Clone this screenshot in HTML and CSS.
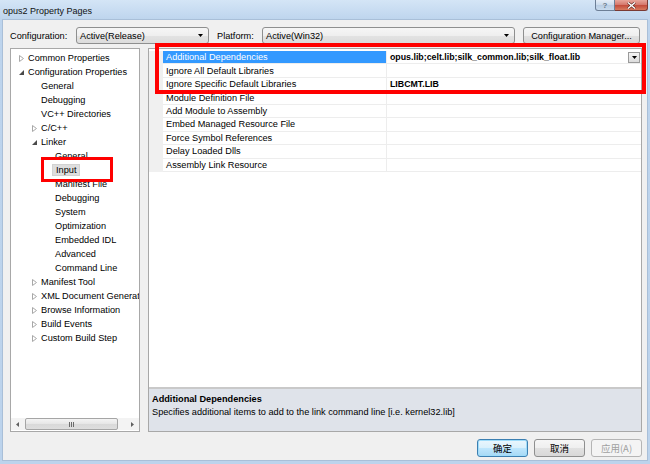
FILE: index.html
```html
<!DOCTYPE html>
<html lang="en">
<head>
<meta charset="UTF-8">
<meta name="viewport" content="width=device-width, initial-scale=1.0">
<title>opus2 Property Pages</title>
<link rel="stylesheet" href="styles.css">
</head>
<body>
    <div class="window">
        <!-- Title Bar -->
        <div class="title-bar">
            <span class="title-text">opus2 Property Pages</span>
            <div class="caption-buttons">
                <span class="cap-btn cap-help">?</span>
                <span class="cap-btn cap-close">
                    <svg width="9" height="7" viewBox="0 0 9 7"><path d="M1 0.5 L8 6.5 M8 0.5 L1 6.5" stroke="#5a2a24" stroke-width="2.6"/><path d="M1 0.5 L8 6.5 M8 0.5 L1 6.5" stroke="#fff" stroke-width="1.4"/></svg>
                </span>
            </div>
        </div>

        <div class="client">
            <!-- Configuration / Platform -->
            <div class="config-row">
                <span class="label label-config">Configuration:</span>
                <div class="combo combo-config">
                    <span>Active(Release)</span>
                    <svg class="combo-arrow" width="5" height="3" viewBox="0 0 5 3"><path d="M0 0 H5 L2.5 3 Z" fill="#000"/></svg>
                </div>
                <span class="label label-platform">Platform:</span>
                <div class="combo combo-platform">
                    <span>Active(Win32)</span>
                    <svg class="combo-arrow" width="5" height="3" viewBox="0 0 5 3"><path d="M0 0 H5 L2.5 3 Z" fill="#000"/></svg>
                </div>
                <button class="btn btn-manager">Configuration Manager...</button>
            </div>

            <div class="panes">
                <!-- Tree -->
                <div class="tree">
                    <div class="tree-items">
                        <div class="row l1"><span class="tw"><svg width="5" height="7" viewBox="0 0 5 7"><path d="M0.5 0.5 L4.5 3.5 L0.5 6.5 Z" fill="none" stroke="#a8a8a8"/></svg></span>Common Properties</div>
                        <div class="row l1"><span class="tw"><svg width="5" height="5" viewBox="0 0 5 5"><path d="M5 0 V5 H0 Z" fill="#4a4a4a"/></svg></span>Configuration Properties</div>
                        <div class="row l2"><span class="tw"></span>General</div>
                        <div class="row l2"><span class="tw"></span>Debugging</div>
                        <div class="row l2"><span class="tw"></span>VC++ Directories</div>
                        <div class="row l2"><span class="tw"><svg width="5" height="7" viewBox="0 0 5 7"><path d="M0.5 0.5 L4.5 3.5 L0.5 6.5 Z" fill="none" stroke="#a8a8a8"/></svg></span>C/C++</div>
                        <div class="row l2"><span class="tw"><svg width="5" height="5" viewBox="0 0 5 5"><path d="M5 0 V5 H0 Z" fill="#4a4a4a"/></svg></span>Linker</div>
                        <div class="row l3">General</div>
                        <div class="row l3"><span class="sel">Input</span></div>
                        <div class="row l3">Manifest File</div>
                        <div class="row l3">Debugging</div>
                        <div class="row l3">System</div>
                        <div class="row l3">Optimization</div>
                        <div class="row l3">Embedded IDL</div>
                        <div class="row l3">Advanced</div>
                        <div class="row l3">Command Line</div>
                        <div class="row l2"><span class="tw"><svg width="5" height="7" viewBox="0 0 5 7"><path d="M0.5 0.5 L4.5 3.5 L0.5 6.5 Z" fill="none" stroke="#a8a8a8"/></svg></span>Manifest Tool</div>
                        <div class="row l2"><span class="tw"><svg width="5" height="7" viewBox="0 0 5 7"><path d="M0.5 0.5 L4.5 3.5 L0.5 6.5 Z" fill="none" stroke="#a8a8a8"/></svg></span><span class="clip">XML Document Generator</span></div>
                        <div class="row l2"><span class="tw"><svg width="5" height="7" viewBox="0 0 5 7"><path d="M0.5 0.5 L4.5 3.5 L0.5 6.5 Z" fill="none" stroke="#a8a8a8"/></svg></span>Browse Information</div>
                        <div class="row l2"><span class="tw"><svg width="5" height="7" viewBox="0 0 5 7"><path d="M0.5 0.5 L4.5 3.5 L0.5 6.5 Z" fill="none" stroke="#a8a8a8"/></svg></span>Build Events</div>
                        <div class="row l2"><span class="tw"><svg width="5" height="7" viewBox="0 0 5 7"><path d="M0.5 0.5 L4.5 3.5 L0.5 6.5 Z" fill="none" stroke="#a8a8a8"/></svg></span>Custom Build Step</div>
                    </div>
                    <!-- Horizontal scrollbar -->
                    <div class="hscroll">
                        <span class="sb-btn"><svg width="3" height="5" viewBox="0 0 3 5"><path d="M3 0 V5 L0 2.5 Z" fill="#606060"/></svg></span>
                        <span class="sb-thumb"><span class="grip"></span><span class="grip"></span><span class="grip"></span></span>
                        <span class="sb-btn sb-right"><svg width="3" height="5" viewBox="0 0 3 5"><path d="M0 0 V5 L3 2.5 Z" fill="#606060"/></svg></span>
                    </div>
                </div>

                <!-- Property Grid -->
                <div class="grid-pane">
                    <div class="props">
                        <div class="prow">
                            <span class="gut"></span>
                            <span class="name selected">Additional Dependencies</span>
                            <span class="val">opus.lib;celt.lib;silk_common.lib;silk_float.lib
                                <span class="drop"><svg width="5" height="3" viewBox="0 0 5 3"><path d="M0 0 H5 L2.5 3 Z" fill="#000"/></svg></span>
                            </span>
                        </div>
                        <div class="prow"><span class="gut"></span><span class="name">Ignore All Default Libraries</span><span class="val"></span></div>
                        <div class="prow"><span class="gut"></span><span class="name">Ignore Specific Default Libraries</span><span class="val">LIBCMT.LIB</span></div>
                        <div class="prow"><span class="gut"></span><span class="name">Module Definition File</span><span class="val"></span></div>
                        <div class="prow"><span class="gut"></span><span class="name">Add Module to Assembly</span><span class="val"></span></div>
                        <div class="prow"><span class="gut"></span><span class="name">Embed Managed Resource File</span><span class="val"></span></div>
                        <div class="prow"><span class="gut"></span><span class="name">Force Symbol References</span><span class="val"></span></div>
                        <div class="prow"><span class="gut"></span><span class="name">Delay Loaded Dlls</span><span class="val"></span></div>
                        <div class="prow"><span class="gut"></span><span class="name">Assembly Link Resource</span><span class="val"></span></div>
                    </div>
                    <div class="desc">
                        <div class="desc-title">Additional Dependencies</div>
                        <div class="desc-text">Specifies additional items to add to the link command line [i.e. kernel32.lib]</div>
                    </div>
                </div>
            </div>

            <!-- Dialog buttons -->
            <div class="footer">
                <button class="btn fbtn fbtn-default">确定</button>
                <button class="btn fbtn">取消</button>
                <button class="btn fbtn fbtn-disabled">应用(A)</button>
            </div>
        </div>
    </div>

    <!-- Red annotation boxes -->
    <div class="mark mark-input"></div>
    <div class="mark mark-deps"></div>
</body>
</html>
```

FILE: styles.css
```css
/* General Reset */
* {
    margin: 0;
    padding: 0;
    box-sizing: border-box;
}

body {
    width: 650px;
    height: 464px;
    overflow: hidden;
    position: relative;
    font-family: "Liberation Sans", Arial, sans-serif;
    font-size: 9.2px;
    color: #000;
    background: #bcd4ec;
}

/* Window frame */
.window {
    height: 464px;
    display: flex;
    flex-direction: column;
    padding: 0 3px 4px 3px;
    background: linear-gradient(#d4e5f6, #bdd4ed 20px, #bcd3ec);
}

.title-bar {
    height: 20px;
    flex: none;
    display: flex;
    align-items: flex-start;
}

.title-text {
    font-size: 9px;
    margin: 6px 0 0 0;
    color: #111;
}

.caption-buttons {
    margin-left: auto;
    margin-right: -1px;
    display: flex;
}

.cap-btn {
    height: 11px;
    display: flex;
    align-items: center;
    justify-content: center;
    border: 1px solid #6d7f96;
    border-top: none;
}

.cap-help {
    width: 20px;
    font-size: 8px;
    font-weight: bold;
    color: #6c7a8c;
    border-radius: 0 0 0 3px;
    background: linear-gradient(#e6eef8, #cbdbec 50%, #b9cde3 51%, #c8dbee);
}

.cap-close {
    width: 33px;
    border-left: none;
    border-color: #7a3a33;
    border-radius: 0 0 3px 0;
    background: linear-gradient(#e8a59a, #d4766a 50%, #c24a3a 51%, #d77a5f);
}

/* Client area */
.client {
    flex: 1;
    display: flex;
    flex-direction: column;
    padding: 7px 5px 3px 7px;
    background: #f0f0f0;
    box-shadow: 0 0 0 1px #a9bfd8;
}

.config-row {
    height: 17px;
    display: flex;
    align-items: center;
}

.label-config {
    width: 66px;
}

.label-platform {
    width: 45px;
    margin-left: 8px;
}

.combo {
    height: 17px;
    display: flex;
    align-items: center;
    padding-left: 3px;
    border: 1px solid #8e8f8f;
    border-radius: 3px;
    background: linear-gradient(#f6f6f6, #efefef 50%, #e3e3e3 51%, #dcdcdc);
}

.combo-arrow {
    margin-left: auto;
    margin-right: 5px;
}

.combo-config {
    width: 133px;
}

.combo-platform {
    width: 253px;
}

.btn {
    font-family: "Liberation Sans", Arial, sans-serif;
    font-size: 9.2px;
    color: #000;
    border: 1px solid #8e8f8f;
    border-radius: 3px;
    background: linear-gradient(#f6f6f6, #efefef 50%, #e1e1e1 51%, #d8d8d8);
}

.btn-manager {
    width: 117px;
    height: 17px;
    margin-left: 8px;
}

/* Panes */
.panes {
    height: 384px;
    margin-top: 4px;
    display: flex;
    gap: 8px;
}

/* Tree */
.tree {
    width: 130px;
    flex: none;
    display: flex;
    flex-direction: column;
    background: #fff;
    border: 1px solid #a8a8a8;
    overflow: hidden;
}

.tree-items {
    flex: 1;
    padding-top: 2px;
}

.row {
    height: 14px;
    display: flex;
    align-items: center;
    white-space: nowrap;
}

.row.l1 { padding-left: 8px; }
.row.l2 { padding-left: 21px; }
.row.l3 { padding-left: 44px; }

.tw {
    width: 9px;
    flex: none;
    display: flex;
    align-items: center;
}

.clip {
    overflow: hidden;
    min-width: 0;
}

.sel {
    height: 12px;
    line-height: 11px;
    padding: 0 3px;
    margin-left: -3px;
    background: #dedede;
    border: 1px solid #d2d2d2;
}

.hscroll {
    height: 12px;
    margin-bottom: 1px;
    display: flex;
    align-items: stretch;
    background: #f3f3f3;
}

.sb-btn {
    width: 13px;
    display: flex;
    align-items: center;
    justify-content: center;
}

.sb-right {
    margin-left: auto;
}

.sb-thumb {
    width: 93px;
    margin-left: 1px;
    display: flex;
    align-items: center;
    justify-content: center;
    gap: 1px;
    border: 1px solid #a5a5a5;
    border-radius: 2px;
    background: linear-gradient(#f4f4f4, #e6e6e6 50%, #d9d9d9 51%, #dedede);
}

.grip {
    width: 1px;
    height: 5px;
    background: #6b6b6b;
}

/* Property grid */
.grid-pane {
    flex: 1;
    display: flex;
    flex-direction: column;
    background: #fff;
    border: 1px solid #a8a8a8;
}

.props {
    flex: 1;
    padding-top: 2px;
}

.prow {
    height: 13.45px;
    display: flex;
}

.gut {
    width: 14px;
    flex: none;
    background: #f0f0f0;
}

.name {
    width: 224px;
    flex: none;
    display: flex;
    align-items: center;
    padding-left: 3px;
    white-space: nowrap;
    border-bottom: 1px solid #ededed;
    border-right: 1px solid #ededed;
}

.name.selected {
    background: #3399ff;
    color: #fff;
}

.val {
    flex: 1;
    display: flex;
    align-items: center;
    padding-left: 3px;
    font-size: 8.8px;
    font-weight: bold;
    white-space: nowrap;
    border-bottom: 1px solid #ededed;
}

.drop {
    width: 12px;
    height: 11px;
    margin-left: auto;
    margin-right: 1px;
    display: flex;
    align-items: center;
    justify-content: center;
    border: 1px solid #9a9a9a;
    background: linear-gradient(#f5f5f5, #dcdcdc);
}

.desc {
    height: 44px;
    flex: none;
    padding: 4px 0 0 3px;
    background: #dfe3ea;
    border-top: 2px solid #c9c9c9;
}

.desc-title,
.desc-text {
    line-height: 13px;
    white-space: nowrap;
}

.desc-title {
    font-weight: bold;
}

/* Footer buttons */
.footer {
    margin-top: 7px;
    display: flex;
    justify-content: flex-end;
    gap: 6px;
}

.fbtn {
    width: 51px;
    height: 18px;
    font-family: "Noto Sans CJK SC", "Liberation Sans", sans-serif;
    font-size: 9.5px;
}

.fbtn-default {
    border-color: #3c7fb1;
    box-shadow: inset 0 0 0 1px #9fdcfa;
    background: linear-gradient(#eaf6fd, #d9f0fc 50%, #bee6fd 51%, #a7d9f5);
}

.fbtn-disabled {
    color: #a0a0a0;
    border-color: #b5b5b5;
    background: #f4f4f4;
}

/* Red annotation boxes */
.mark {
    position: absolute;
    border: 3px solid #ff0000;
}

.mark-input {
    left: 41px;
    top: 157px;
    width: 72px;
    height: 25px;
}

.mark-deps {
    left: 155px;
    top: 43px;
    width: 491px;
    height: 51px;
    border-width: 4px;
}
```
